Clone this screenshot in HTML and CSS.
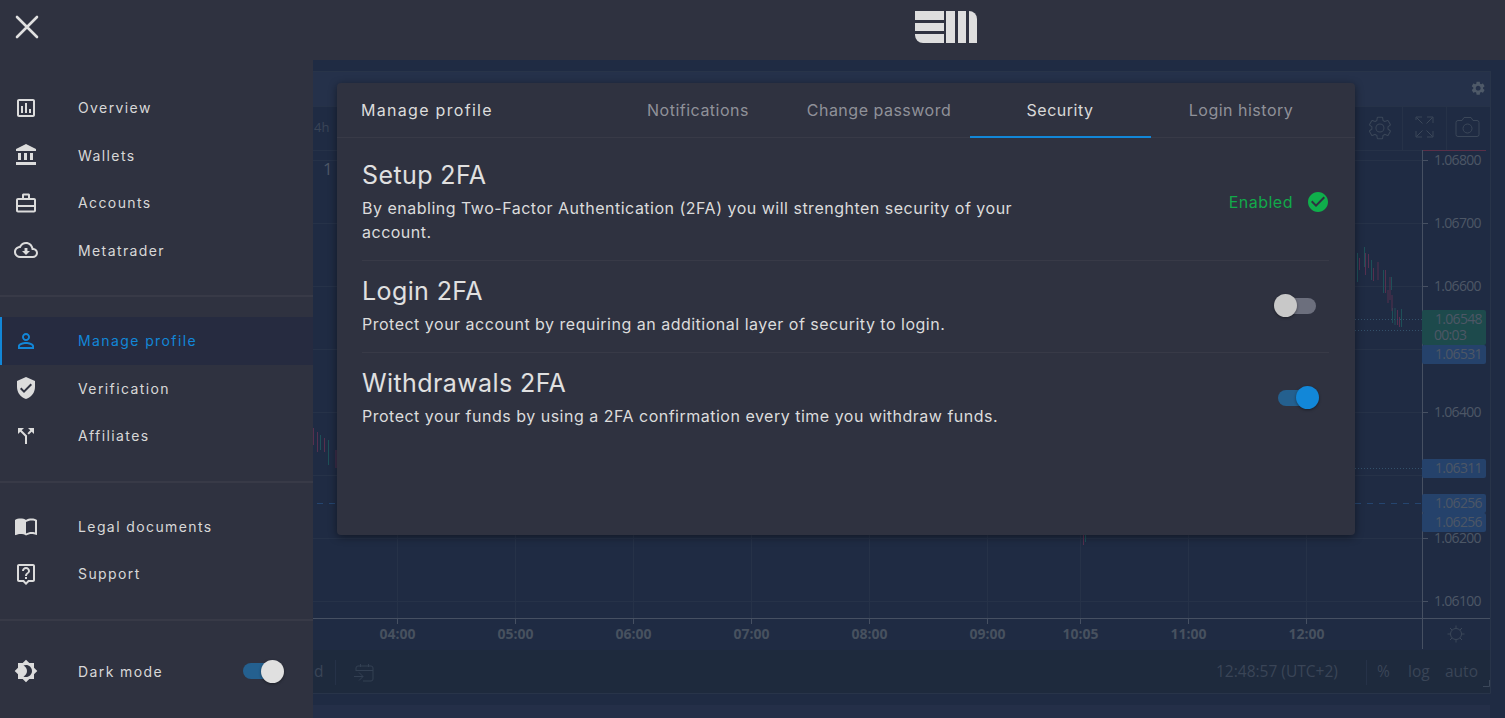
FILE: index.html
```html
<!DOCTYPE html>
<html lang="en">

<head>
    <meta charset="UTF-8">
    <title>Manage profile</title>
    <link rel="stylesheet" href="styles.css">
</head>

<body>
    <div class="app">
        <header class="topbar">
            <svg class="close-icon" viewBox="0 0 24 24">
                <path d="M2 2l20 20M22 2L2 22" />
            </svg>
            <svg class="logo" viewBox="0 0 62 32">
                <path d="M0 0h29v9H0zM0 12h29v8H0z" />
                <path d="M0 23h29v9H8a8 8 0 0 1-8-8z" />
                <path d="M31 0h9v32h-9zM43 0h8v32h-8z" />
                <path d="M54 0a8 8 0 0 1 8 8v24h-8z" />
            </svg>
        </header>

        <aside class="sidebar">
            <nav class="nav-group nav-first">
                <a class="nav-item">
                    <svg class="nav-icon" viewBox="0 0 24 24"><path d="M19 3H5c-1.1 0-2 .9-2 2v14c0 1.1.9 2 2 2h14c1.1 0 2-.9 2-2V5c0-1.1-.9-2-2-2zm0 16H5V5h14v14zM7 10h2v7H7zm4-3h2v10h-2zm4 6h2v4h-2z" /></svg>
                    Overview
                </a>
                <a class="nav-item">
                    <svg class="nav-icon" viewBox="0 0 24 24"><path d="M4 10v7h3v-7H4zm6 0v7h3v-7h-3zM2 22h20v-3H2v3zm14-12v7h3v-7h-3zm-4-9L2 6v2h20V6L12 1z" /></svg>
                    Wallets
                </a>
                <a class="nav-item">
                    <svg class="nav-icon" viewBox="0 0 24 24"><path d="M20 7h-4V3.500L15 2.500H9L8 3.500V7H4c-1.100 0-2 .9-2 2v10.500c0 1.100.9 2 2 2h16c1.100 0 2-.9 2-2V9c0-1.100-.9-2-2-2zM10 4.500h4V7h-4V4.500zM4 9h16v5H4V9zm16 10.500H4V16h16v3.500z" /></svg>
                    Accounts
                </a>
                <a class="nav-item">
                    <svg class="nav-icon" viewBox="0 0 24 24"><path d="M19.35 10.04C18.67 6.59 15.64 4 12 4 9.11 4 6.6 5.64 5.35 8.04 2.34 8.36 0 10.91 0 14c0 3.31 2.69 6 6 6h13c2.76 0 5-2.24 5-5 0-2.64-2.05-4.78-4.65-4.96zM19 18H6c-2.21 0-4-1.79-4-4 0-2.05 1.53-3.76 3.56-3.97l1.07-.11.5-.95C8.08 7.14 9.94 6 12 6c2.62 0 4.88 1.86 5.39 4.43l.3 1.5 1.53.11c1.56.1 2.78 1.41 2.78 2.96 0 1.65-1.35 3-3 3zm-5.55-8h-2.9v3H8l4 4 4-4h-2.55z" /></svg>
                    Metatrader
                </a>
            </nav>
            <nav class="nav-group">
                <a class="nav-item active">
                    <svg class="nav-icon" viewBox="0 0 24 24"><path d="M12 5.900c1.160 0 2.100.94 2.100 2.100s-.94 2.100-2.100 2.100S9.900 9.160 9.900 8s.94-2.100 2.100-2.100m0 9c2.970 0 6.100 1.460 6.100 2.100v1.100H5.900V17c0-.64 3.130-2.100 6.100-2.100M12 4C9.790 4 8 5.790 8 8s1.790 4 4 4 4-1.790 4-4-1.790-4-4-4zm0 9c-2.670 0-8 1.340-8 4v3h16v-3c0-2.660-5.330-4-8-4z" /></svg>
                    Manage profile
                </a>
                <a class="nav-item">
                    <svg class="nav-icon" viewBox="0 0 24 24"><path d="M12 1L3 5v6c0 5.550 3.840 10.740 9 12 5.160-1.260 9-6.450 9-12V5l-9-4zm-2 16l-4-4 1.410-1.410L10 14.170l6.590-6.590L18 9l-8 8z" /></svg>
                    Verification
                </a>
                <a class="nav-item">
                    <svg class="nav-icon" viewBox="0 0 24 24"><path d="M14 4l2.290 2.290-2.880 2.880 1.420 1.420 2.880-2.880L20 10V4zm-4 0H4v6l2.290-2.290 4.710 4.700V20h2v-8.410l-5.290-5.300z" /></svg>
                    Affiliates
                </a>
            </nav>
            <nav class="nav-group">
                <a class="nav-item">
                    <svg class="nav-icon" viewBox="0 0 24 24"><path d="M21 5c-1.110-.35-2.330-.5-3.500-.5-1.950 0-4.050.4-5.500 1.500-1.450-1.100-3.550-1.500-5.500-1.500S2.450 4.900 1 6v14.650c0 .25.25.5.5.5.1 0 .15-.05.25-.05C3.100 20.450 5.050 20 6.500 20c1.950 0 4.050.4 5.500 1.500 1.350-.85 3.800-1.500 5.500-1.500 1.650 0 3.350.3 4.750 1.050.1.05.15.05.25.05.25 0 .5-.25.5-.5V6c-.6-.45-1.250-.75-2-1zm0 13.500c-1.100-.35-2.300-.5-3.500-.5-1.700 0-4.150.65-5.500 1.500V8c1.350-.85 3.800-1.500 5.500-1.500 1.200 0 2.400.15 3.500.5v11.500z" /></svg>
                    Legal documents
                </a>
                <a class="nav-item">
                    <svg class="nav-icon" viewBox="0 0 24 24"><path d="M19 2H5c-1.110 0-2 .9-2 2v14c0 1.100.89 2 2 2h4l3 3 3-3h4c1.100 0 2-.9 2-2V4c0-1.100-.9-2-2-2zm0 16h-4.830l-.59.59L12 20.170l-1.590-1.590-.58-.58H5V4h14v14zm-8-3h2v2h-2zm1-8c1.100 0 2 .9 2 2 0 2-3 1.750-3 5h2c0-2.250 3-2.500 3-5 0-2.210-1.790-4-4-4S8 6.790 8 9h2c0-1.100.9-2 2-2z" /></svg>
                    Support
                </a>
            </nav>
            <div class="nav-group nav-last">
                <div class="nav-item">
                    <svg class="nav-icon" viewBox="0 0 24 24"><path d="M20 8.690V4h-4.690L12 .69 8.690 4H4v4.690L.69 12 4 15.310V20h4.690L12 23.310 15.310 20H20v-4.690L23.310 12 20 8.690zM12 18c-.89 0-1.740-.2-2.500-.55C11.560 16.500 13 14.420 13 12s-1.440-4.500-3.500-5.450C10.260 6.200 11.110 6 12 6c3.310 0 6 2.690 6 6s-2.690 6-6 6z" /></svg>
                    Dark mode
                    <span class="switch on light side-switch"><span class="knob"></span></span>
                </div>
            </div>
        </aside>

        <main class="main">
            <!-- chart behind the overlay, viewBox uses page coordinates -->
            <svg class="chart" viewBox="313 60 1192 658">
                <defs>
                    <path id="gear" d="M19.140 12.940c.04-.3.06-.61.06-.94 0-.32-.02-.64-.07-.94l2.030-1.580c.18-.14.23-.41.12-.61l-1.920-3.320c-.12-.22-.37-.29-.59-.22l-2.390.96c-.5-.38-1.030-.7-1.620-.94l-.36-2.540c-.04-.24-.24-.41-.48-.41h-3.840c-.24 0-.43.17-.47.41l-.36 2.540c-.59.24-1.130.57-1.620.94l-2.390-.96c-.22-.08-.47 0-.59.22L2.740 8.870c-.12.21-.08.47.12.61l2.030 1.580c-.05.3-.09.63-.09.94s.02.64.07.94l-2.030 1.580c-.18.14-.23.41-.12.61l1.920 3.320c.12.22.37.29.59.22l2.390-.96c.5.38 1.030.7 1.620.94l.36 2.540c.05.24.24.41.48.41h3.840c.24 0 .44-.17.47-.41l.36-2.540c.59-.24 1.130-.56 1.620-.94l2.390.96c.22.08.47 0 .59-.22l1.920-3.320c.12-.22.07-.47-.12-.61l-2.010-1.580zM12 15.600c-1.980 0-3.600-1.620-3.600-3.600s1.620-3.600 3.600-3.600 3.600 1.620 3.600 3.600-1.620 3.600-3.600 3.600z" />
                </defs>

                <rect class="c-band" x="313" y="71" width="1177" height="35" />
                <rect class="c-foot" x="313" y="650" width="1177" height="43" />
                <rect class="c-strip" x="313" y="705" width="1177" height="13" />
                <path class="c-frame" d="M313 71.500H1490.500V693.500H313M1490.500 71V693" />
                <path class="c-sep" d="M313 106.500H1490M313 150.500H1422M1402.500 106V150M1446.500 106V150M335.500 660V685M1366.500 660V685" />

                <path class="c-grid" d="M313 160.500H1422M313 223.500H1422M313 286.500H1422M313 349.500H1422M313 412.500H1422M313 475.500H1422M313 538.500H1422M313 601.500H1422M397.500 150V618M515.500 150V618M633.500 150V618M751.500 150V618M869.500 150V618M987.500 150V618M1080.500 150V618M1188.500 150V618M1306.500 150V618" />

                <path class="c-up" d="M1357.500 253V282M1364.500 247V267M1371.500 260V280M1391.500 277V290M1383.500 270V293M1392.500 308V323M1395 308V325M1401.500 309V327M320.500 435V450M328.500 440V465M1085.500 535V542" />
                <path class="c-down" d="M1359.500 258V270M1365.500 253V275M1368.500 254V268M1373.500 268V281M1378 262V280M1385.500 270V293M1390 277V300M1388 290V303M1392 295V311M1397.500 310V325M1399.500 317V327M313.500 428V445M317.500 432V452M324.500 438V452M336 450V468M1083.500 535V545" />

                <path class="c-dot" d="M1355 319.500H1422M1355 330.500H1422M1355 468.500H1422" />
                <path class="c-dash" d="M317 503.500H337M1355 503.500H1422" />

                <path class="c-red" d="M1422 150.500H1486" />
                <path class="c-axis" d="M1422.500 150V649M313 618.500H1490M1422 160.500H1428M1422 223.500H1428M1422 286.500H1428M1422 349.500H1428M1422 412.500H1428M1422 468.500H1428M1422 503.500H1428M1422 522.500H1428M1422 538.500H1428M1422 601.500H1428M397.500 618V624M515.500 618V624M633.500 618V624M751.500 618V624M869.500 618V624M987.500 618V624M1080.500 618V624M1188.500 618V624M1306.500 618V624" />

                <rect class="c-tag-green" x="1422" y="310" width="64" height="35" rx="2" />
                <rect class="c-tag-blue" x="1422" y="345" width="64" height="19" rx="2" />
                <rect class="c-tag-blue" x="1422" y="459" width="64" height="19" rx="2" />
                <rect class="c-tag-blue" x="1422" y="494" width="64" height="19" rx="2" />
                <rect class="c-tag-blue" x="1422" y="513" width="64" height="19" rx="2" />

                <g class="c-price">
                    <text x="1434" y="165">1.06800</text>
                    <text x="1434" y="228">1.06700</text>
                    <text x="1434" y="291">1.06600</text>
                    <text x="1435" y="324">1.06548</text>
                    <text x="1434" y="340">00:03</text>
                    <text x="1435" y="359">1.06531</text>
                    <text x="1434" y="417">1.06400</text>
                    <text x="1435" y="473">1.06311</text>
                    <text x="1435" y="508">1.06256</text>
                    <text x="1435" y="527">1.06256</text>
                    <text x="1434" y="543">1.06200</text>
                    <text x="1434" y="606">1.06100</text>
                </g>
                <g class="c-time">
                    <text x="397.500" y="639">04:00</text>
                    <text x="515.500" y="639">05:00</text>
                    <text x="633.500" y="639">06:00</text>
                    <text x="751.500" y="639">07:00</text>
                    <text x="869.500" y="639">08:00</text>
                    <text x="987.500" y="639">09:00</text>
                    <text x="1080.500" y="639">10:05</text>
                    <text x="1188.500" y="639">11:00</text>
                    <text x="1306.500" y="639">12:00</text>
                </g>
                <g class="c-foot-text">
                    <text x="1216" y="677">12:48:57 (UTC+2)</text>
                    <text x="1377" y="677">%</text>
                    <text x="1408" y="677">log</text>
                    <text x="1445" y="677">auto</text>
                    <text x="314" y="677">d</text>
                    <text class="c-small" x="314" y="132">4h</text>
                    <text class="c-one" x="323" y="175">1</text>
                </g>

                <use class="c-gear-small" href="#gear" transform="translate(1470 80) scale(.68)" />
                <use class="c-gear-big" href="#gear" transform="translate(1366.500 114.500) scale(1.120)" />
                <path class="c-icon" d="M1416 120v-3h6M1427 117h6v6M1416 131v6h6M1433 131v6h-6M1416.500 117.500l6 6M1432.500 117.500l-6 6M1416.500 136.500l6-6M1432.500 136.500l-6-6" />
                <path class="c-icon" d="M1458 120.500h4l2-3h7l2 3h4a2 2 0 0 1 2 2v12a2 2 0 0 1-2 2h-19a2 2 0 0 1-2-2v-12a2 2 0 0 1 2-2z" />
                <circle class="c-icon" cx="1467.500" cy="128.500" r="4.500" />
                <path class="c-icon-dim" d="M356 671v-3a2 2 0 0 1 2-2h13a2 2 0 0 1 2 2v11a2 2 0 0 1-2 2h-8M356 670.500h17M360.500 664v3M368.500 664v3M354 676.500h9M359 672.500l4 4-4 4" />
                <circle class="c-icon" cx="1456" cy="634" r="5.500" />
                <path class="c-icon" d="M1456 625.500v3M1456 639.500v3M1447.500 634h3M1461.500 634h3M1450 628l2 2M1460 638l2 2M1462 628l-2 2M1452 638l-2 2" />
                <path class="c-icon" d="M1483 686.500h6.500V680" />
            </svg>

            <section class="modal">
                <div class="modal-head">
                    <h2 class="modal-title">Manage profile</h2>
                    <div class="tabs">
                        <a class="tab">Notifications</a>
                        <a class="tab">Change password</a>
                        <a class="tab selected">Security</a>
                        <a class="tab">Login history</a>
                    </div>
                </div>
                <div class="modal-body">
                    <div class="setting">
                        <div class="setting-text">
                            <h3>Setup 2FA</h3>
                            <p>By enabling Two-Factor Authentication (2FA) you will strenghten security of your account.</p>
                        </div>
                        <div class="status">
                            Enabled
                            <svg class="status-icon" viewBox="0 0 24 24"><path d="M12 2C6.480 2 2 6.480 2 12s4.480 10 10 10 10-4.480 10-10S17.520 2 12 2zm-2 15l-5-5 1.410-1.410L10 14.170l7.590-7.590L19 8l-9 9z" /></svg>
                        </div>
                    </div>
                    <div class="setting">
                        <div class="setting-text">
                            <h3>Login 2FA</h3>
                            <p>Protect your account by requiring an additional layer of security to login.</p>
                        </div>
                        <span class="switch row-switch"><span class="knob"></span></span>
                    </div>
                    <div class="setting">
                        <div class="setting-text">
                            <h3>Withdrawals 2FA</h3>
                            <p>Protect your funds by using a 2FA confirmation every time you withdraw funds.</p>
                        </div>
                        <span class="switch on row-switch"><span class="knob"></span></span>
                    </div>
                </div>
            </section>
        </main>
    </div>
</body>

</html>
```

FILE: styles.css
```css
* {
    margin: 0;
    padding: 0;
    box-sizing: border-box;
}

html,
body {
    height: 100%;
    overflow: hidden;
}

body {
    background-color: #2f3240;
    color: #dcdcdc;
    font-family: "Inter", "Noto Sans", sans-serif;
}

.app {
    display: grid;
    grid-template-columns: 313px 1fr;
    grid-template-rows: 60px 1fr;
    height: 718px;
}

/* top bar */
.topbar {
    grid-column: 1 / 3;
    display: flex;
    align-items: center;
    justify-content: space-between;
    padding: 0 528px 6px 15px;
    background-color: #2f3240;
}

.close-icon {
    width: 24px;
    height: 24px;
    fill: none;
    stroke: #e0e0e0;
    stroke-width: 2.6;
    stroke-linecap: round;
}

.logo {
    width: 62px;
    height: 32px;
    fill: #dedede;
}

/* sidebar */
.sidebar {
    background-color: #2f3240;
    display: flex;
    flex-direction: column;
}

.nav-group {
    padding: 20px 0 21px;
    border-bottom: 2px solid #383a47;
}

.nav-first {
    padding-top: 24px;
}

.nav-last {
    border-bottom: 0;
    padding-top: 27px;
}

.nav-item {
    display: flex;
    align-items: center;
    gap: 40px;
    height: 47.5px;
    padding: 0 32px 0 14px;
    font-size: 14px;
    letter-spacing: 1.4px;
    color: #d8d8d8;
}

.nav-icon {
    width: 24px;
    height: 24px;
    flex-shrink: 0;
    fill: #dcdcdc;
}

.nav-item.active {
    background-color: #262b40;
    box-shadow: inset 2px 0 0 #1287d8;
    color: #1287d8;
}

.nav-item.active .nav-icon {
    fill: #1287d8;
}

.side-switch {
    margin-left: auto;
}

/* switch */
.switch {
    display: flex;
    align-items: center;
    flex-shrink: 0;
    width: 38px;
    height: 16px;
    border-radius: 8px;
    background-color: #6c6f7d;
}

.knob {
    width: 23px;
    height: 23px;
    margin-left: -4px;
    border-radius: 50%;
    background-color: #c8c8c8;
    box-shadow: 0 1px 3px rgba(0, 0, 0, .4);
}

.switch.on {
    justify-content: flex-end;
    background-color: #24608f;
}

.switch.on .knob {
    margin-left: 0;
    margin-right: -3px;
    background-color: #1287d8;
}

.switch.light .knob {
    background-color: #e0e0e0;
}

.row-switch {
    margin-right: 13px;
}

/* chart */
.main {
    position: relative;
    overflow: hidden;
    background-color: #1f2b43;
}

.chart {
    display: block;
    width: 1192px;
    height: 658px;
}

.c-band { fill: #25314a; }
.c-foot { fill: #1e2a3d; }
.c-strip { fill: #242f48; }
.c-frame { fill: none; stroke: #283449; }
.c-sep { fill: none; stroke: #263248; }
.c-grid { fill: none; stroke: #263248; }
.c-up { fill: none; stroke: #1e5058; stroke-width: 1; }
.c-down { fill: none; stroke: #56304f; stroke-width: 1; }
.c-dot { fill: none; stroke: #33506a; stroke-dasharray: 1 2; }
.c-dash { fill: none; stroke: #25456f; stroke-dasharray: 6 6; }
.c-red { fill: none; stroke: #5a2f48; stroke-width: 1; }
.c-axis { fill: none; stroke: #465062; }
.c-tag-green { fill: #1d4a4c; }
.c-tag-blue { fill: #25426b; }
.c-icon { fill: none; stroke: #3b4759; }
.c-icon-dim { fill: none; stroke: #334053; }
.c-gear-small { fill: #4e5968; }
.c-gear-big { fill: none; stroke: #3b4759; stroke-width: .9; }

.c-price text {
    fill: #4d5766;
    font-family: "Open Sans", sans-serif;
    font-size: 14px;
    letter-spacing: -.7px;
}

.c-time text {
    fill: #47515f;
    font-family: "Open Sans", sans-serif;
    font-size: 14px;
    font-weight: 700;
    text-anchor: middle;
}

.c-foot-text text {
    fill: #3a4557;
    font-family: "Open Sans", sans-serif;
    font-size: 15.5px;
}

.c-foot-text .c-small {
    font-size: 13px;
}

.c-foot-text .c-one {
    font-size: 17px;
    fill: #4d5766;
}

/* modal */
.modal {
    position: absolute;
    left: 24px;
    top: 23px;
    width: 1018px;
    height: 452px;
    border-radius: 4px;
    background-color: #2f3240;
    box-shadow: 0 2px 8px rgba(0, 0, 0, .45);
}

.modal-head {
    display: flex;
    align-items: center;
    justify-content: space-between;
    height: 55px;
    padding: 0 23.5px 0 24px;
    border-bottom: 1px solid #383a47;
}

.modal-title {
    font-size: 16px;
    font-weight: 400;
    letter-spacing: 1.3px;
    color: #dcdcdc;
}

.tabs {
    display: flex;
    align-self: stretch;
}

.tab {
    display: flex;
    align-items: center;
    justify-content: center;
    width: 181px;
    font-size: 16px;
    letter-spacing: .5px;
    color: #8f9199;
    border-bottom: 2px solid transparent;
    margin-bottom: -1px;
}

.tab.selected {
    color: #d8d8d8;
    border-bottom-color: #1287d8;
}

.modal-body {
    padding: 7px 26px 0 25px;
}

.setting {
    display: flex;
    align-items: center;
    justify-content: space-between;
    padding: 14px 0 16px;
    border-bottom: 1px solid #383a47;
}

.setting:last-child {
    border-bottom: 0;
}

.setting-text {
    max-width: 665px;
}

.setting-text h3 {
    font-size: 25px;
    font-weight: 400;
    letter-spacing: .4px;
    line-height: 32px;
    color: #e0e0e0;
}

.setting-text p {
    margin-top: 5px;
    font-size: 16px;
    letter-spacing: .5px;
    line-height: 24px;
    color: #dcdcdc;
}

.status {
    display: flex;
    align-items: center;
    gap: 13px;
    margin-right: -1px;
    font-size: 16px;
    letter-spacing: .5px;
    color: #12a94a;
}

.status-icon {
    width: 24px;
    height: 24px;
    fill: #0fae4b;
}
```
